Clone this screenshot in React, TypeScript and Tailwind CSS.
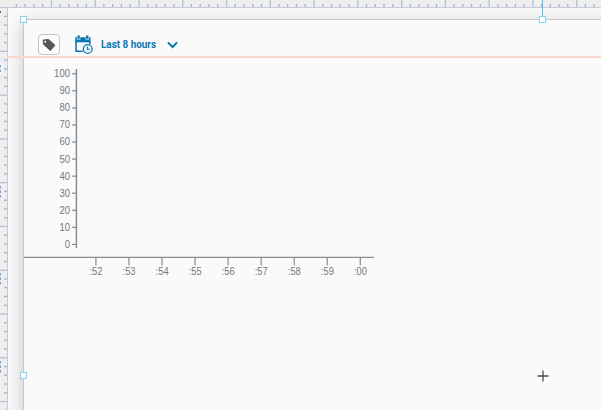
const MAJOR = 43.77;
const majors = Array.from({ length: 15 }, (_, i) => 7.6 + i * MAJOR);
const minors = majors.flatMap((m) => [1, 2, 3, 4].map((k) => m + (k * MAJOR) / 5));
const values = [100, 90, 80, 70, 60, 50, 40, 30, 20, 10, 0];
const times = [':52', ':53', ':54', ':55', ':56', ':57', ':58', ':59', ':00'];

function TopRuler() {
  return (
    <svg className="block h-2 w-full shrink-0 bg-[#eeeeee]" viewBox="0 0 601 8">
      {majors.slice(1).map((x) => (
        <path key={x} d={`M${x + 0.1} 0V7`} stroke="#b2bfd5" strokeWidth="1.3" />
      ))}
      {minors.map((x) => (
        <path key={x} d={`M${x} 4V7`} stroke="#a4b2cb" strokeWidth="1.3" />
      ))}
      <path d="M0 7.5H601" stroke="#c2cad8" />
    </svg>
  );
}

function LeftRuler() {
  return (
    <svg className="block h-[402px] w-2 shrink-0 bg-[#eeeeee]" viewBox="0 8 8 402">
      {majors.slice(1).map((y) => (
        <path key={y} d={`M0 ${y}H7`} stroke="#b2bfd5" strokeWidth="1.3" />
      ))}
      {minors.map((y) => (
        <path key={y} d={`M4 ${y}H7`} stroke="#a4b2cb" strokeWidth="1.3" />
      ))}
      <path d="M7.5 8V410" stroke="#c2cad8" />
      <path d="M0 11H1V13H0Z" fill="#52658c" />
      <path d="M0 63H2.5V74H0Z" fill="#fafafa" />
      <path d="M.5 65V73M.5 186V199M.5 273V286M.5 361V373" stroke="#7d9bd0" strokeDasharray="2.5 2" />
    </svg>
  );
}

function TagButton() {
  return (
    <button className="flex h-[21px] w-[22px] items-center justify-center rounded-[4px] border border-[#c4c4c4] bg-[#fcfcfc]">
      <svg className="h-[14px] w-[14px] shrink-0" viewBox="0 0 14 14">
        <path
          fillRule="evenodd"
          d="M1.2 1.5 6.2 1Q6.8 1 7.3 1.5L12.9 6.8Q13.5 7.4 12.9 8L8.9 12.4Q8.3 13 7.7 12.4L1.4 6.8Q1 6.4 1 5.8L.7 2Q.7 1.5 1.2 1.5ZM3.2 2.7A1 1 0 1 0 3.2 4.7A1 1 0 1 0 3.2 2.7Z"
          fill="#555555"
        />
      </svg>
    </button>
  );
}

function CalendarClock() {
  return (
    <svg className="h-[21px] w-[20px]" viewBox="0 0 20 21" fill="none" stroke="#0878b5">
      <path d="M2.1 7V17.3H9.5" strokeWidth="1.6" />
      <path d="M15.8 7V10.5" strokeWidth="1.6" />
      <path d="M1.3 3.2H16.5V8.3H1.3Z" fill="#0878b5" stroke="none" />
      <path d="M4.6 1V5.4M13.2 1V5.4" stroke="#fafafa" strokeWidth="3.4" />
      <path d="M4.6 1.6V4.8M13.2 1.6V4.8" strokeWidth="2.4" />
      <circle cx="13.7" cy="15" r="5.6" fill="#fafafa" stroke="none" />
      <circle cx="13.7" cy="15" r="4.4" fill="#fafafa" strokeWidth="1.3" />
      <path d="M13.4 12.4V15.3H16" strokeWidth="1.1" />
    </svg>
  );
}

function Chart() {
  return (
    <svg
      className="block h-[220px] w-[360px] font-['Liberation_Sans',Arial,sans-serif] text-[10px]"
      viewBox="24 64 360 220"
      fill="#74787b"
    >
      <g stroke="#868c91" strokeWidth="1.2">
        <path d="M76.4 69V248" strokeWidth="1.5" />
        <path d="M24 257.4H374" />
        {values.map((v, i) => (
          <path key={v} d={`M72 ${73.8 + i * 17.06}H76`} />
        ))}
        {times.map((t, i) => (
          <path key={t} d={`M${95.9 + i * 33.05} 258V265.5`} />
        ))}
      </g>
      {values.map((v, i) => (
        <text
          key={v}
          x="70"
          y={77.2 + i * 17.06}
          textAnchor="end"
          textLength={String(v).length * 5.3}
          lengthAdjust="spacingAndGlyphs"
        >
          {v}
        </text>
      ))}
      {times.map((t, i) => (
        <text
          key={t}
          x={96 + i * 33.05}
          y="274.8"
          textAnchor="middle"
          textLength="13"
          lengthAdjust="spacingAndGlyphs"
        >
          {t}
        </text>
      ))}
    </svg>
  );
}

function Handle({ className }: { className: string }) {
  return <span className={`absolute h-[7px] w-[7px] border border-[#85d5f2] bg-white ${className}`} />;
}

export default function App() {
  return (
    <main className="relative flex h-[410px] w-[601px] flex-col overflow-hidden bg-[#fafafa]">
      <TopRuler />
      <div className="flex h-[402px]">
        <LeftRuler />
        <div className="min-w-0 flex-1 overflow-hidden bg-[#fafafa] pt-[11px] pl-[15px]">
          <section className="h-[430px] w-[640px] border border-[#c8c8c8] bg-[#fafafa] shadow-[0_4px_16px_rgba(0,0,0,0.22)]">
            <header className="flex h-[44px] items-start pt-[14px] pl-[14px]">
              <TagButton />
              <div className="ml-[14px]">
                <CalendarClock />
              </div>
              <span className="ml-[7px] w-[60px] origin-left scale-x-[0.86] pt-[3px] font-[Roboto,sans-serif] text-[11.5px] leading-[15px] font-bold whitespace-nowrap text-[#0878b5]">
                Last 8 hours
              </span>
              <svg className="mt-[7px] ml-[6px] h-2 w-3" viewBox="0 0 12 8" fill="none">
                <path d="M.9 1.4 5.5 6 10.1 1.4" stroke="#0878b5" strokeWidth="2" />
              </svg>
            </header>
            <Chart />
          </section>
        </div>
      </div>
      <span className="absolute top-[56px] left-[7px] h-[2px] w-[594px] bg-[#fbd5cf]" />
      <span className="absolute top-0 left-[542px] h-[17px] w-px bg-[#45c4f5]" />
      <Handle className="top-[16px] left-[20px]" />
      <Handle className="top-[16px] left-[539px]" />
      <Handle className="top-[372px] left-[20px]" />
      <svg className="absolute top-[370px] left-[537px] h-3 w-3" viewBox="0 0 12 12">
        <path d="M.5 6H11.5M6 .5V11.5" stroke="#4a4a4a" strokeWidth="1.3" />
      </svg>
    </main>
  );
}
